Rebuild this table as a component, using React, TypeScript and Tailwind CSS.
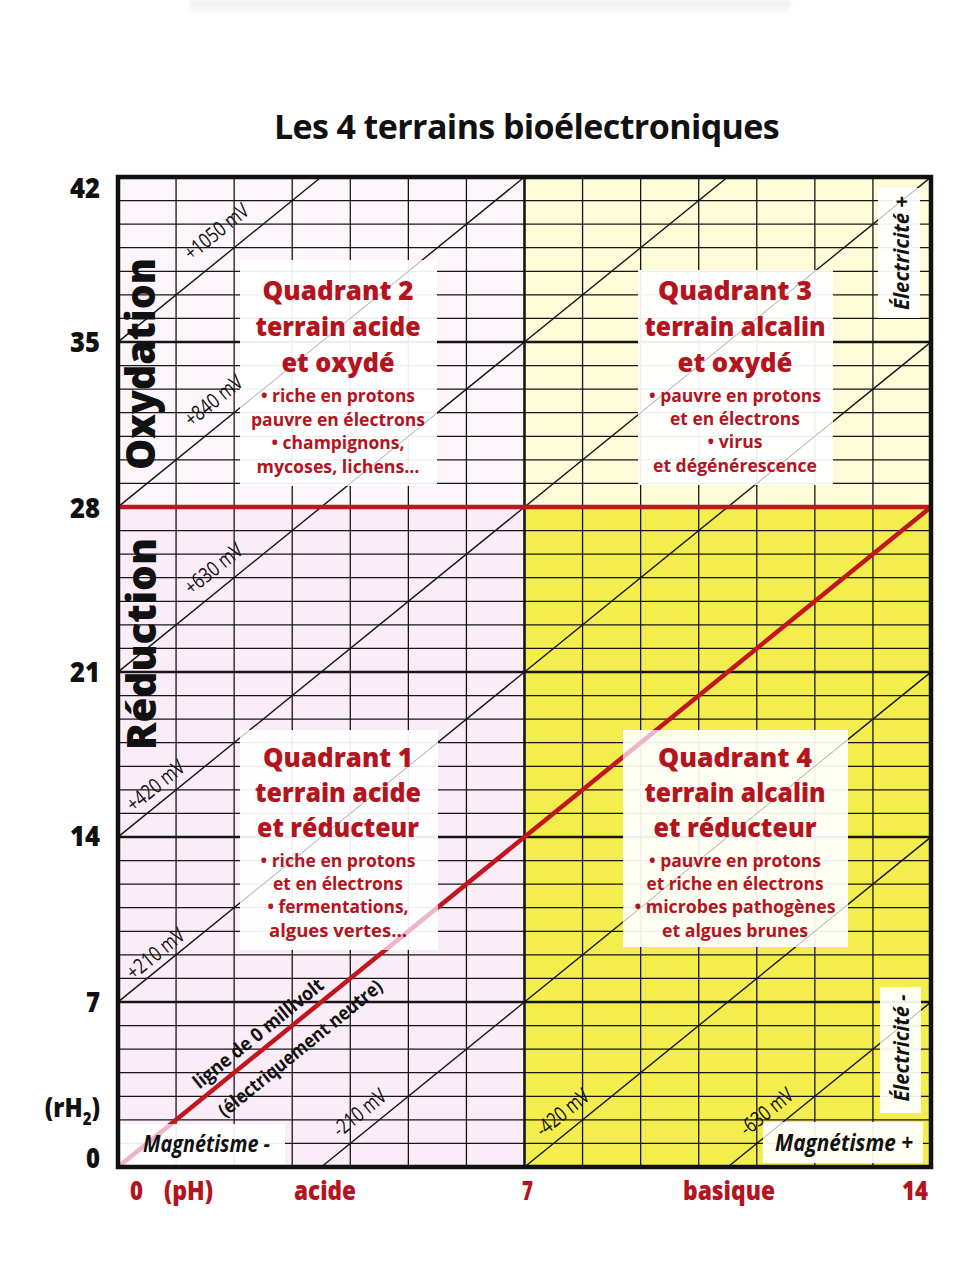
const X0 = 118;
const SX = 813 / 14;
const Y0 = 1167;
const SY = 990 / 42;
const px = (ph: number) => X0 + ph * SX;
const py = (rh: number) => Y0 - rh * SY;

const RED = '#c1161d';
const TXT = '#b3141d';
const FONT = "'Open Sans', 'Noto Sans', 'DejaVu Sans', sans-serif";
const ANGLE = (-Math.atan((2 * SY) / SX) * 180) / Math.PI;

// iso-potential lines: rH2 = 2 pH + k  (30 mV per rH2 unit)
const iso = [35, 28, 21, 14, 7, -7, -14, -21];

const boxes = [
  { x: 240, y: 260, w: 197, h: 226 },
  { x: 638, y: 270, w: 195, h: 215 },
  { x: 240, y: 730, w: 198, h: 220 },
  { x: 623, y: 730, w: 225, h: 217 },
  { x: 878, y: 188, w: 42, h: 130 },
  { x: 880, y: 987, w: 41, h: 126 },
  { x: 120, y: 1124, w: 165, h: 41 },
  { x: 763, y: 1122, w: 160, h: 41 },
];

type Line = { t: string; y: number; w: number; big?: boolean };

const quadrants: { cx: number; lines: Line[] }[] = [
  {
    cx: 338,
    lines: [
      { t: 'Quadrant 2', y: 300, w: 151, big: true },
      { t: 'terrain acide', y: 336, w: 165, big: true },
      { t: 'et oxydé', y: 372, w: 113, big: true },
      { t: '• riche en protons', y: 402, w: 154 },
      { t: 'pauvre en électrons', y: 426, w: 174 },
      { t: '• champignons,', y: 449, w: 133 },
      { t: 'mycoses, lichens…', y: 473, w: 163 },
    ],
  },
  {
    cx: 735,
    lines: [
      { t: 'Quadrant 3', y: 300, w: 154, big: true },
      { t: 'terrain alcalin', y: 336, w: 181, big: true },
      { t: 'et oxydé', y: 372, w: 115, big: true },
      { t: '• pauvre en protons', y: 402, w: 172 },
      { t: 'et en électrons', y: 425, w: 130 },
      { t: '• virus', y: 448, w: 55 },
      { t: 'et dégénérescence', y: 472, w: 164 },
    ],
  },
  {
    cx: 338,
    lines: [
      { t: 'Quadrant 1', y: 767, w: 150, big: true },
      { t: 'terrain acide', y: 802, w: 166, big: true },
      { t: 'et réducteur', y: 837, w: 162, big: true },
      { t: '• riche en protons', y: 867, w: 155 },
      { t: 'et en électrons', y: 890, w: 130 },
      { t: '• fermentations,', y: 913, w: 141 },
      { t: 'algues vertes…', y: 937, w: 138 },
    ],
  },
  {
    cx: 735,
    lines: [
      { t: 'Quadrant 4', y: 767, w: 154, big: true },
      { t: 'terrain alcalin', y: 802, w: 181, big: true },
      { t: 'et réducteur', y: 837, w: 163, big: true },
      { t: '• pauvre en protons', y: 867, w: 172 },
      { t: 'et riche en électrons', y: 890, w: 177 },
      { t: '• microbes pathogènes', y: 913, w: 201 },
      { t: 'et algues brunes', y: 937, w: 146 },
    ],
  },
];

const mvLabels = [
  { t: '+1050 mV', x: 216, y: 231, w: 76 },
  { t: '+840 mV', x: 213, y: 400, w: 68 },
  { t: '+630 mV', x: 213, y: 568, w: 68 },
  { t: '+420 mV', x: 155, y: 785, w: 68 },
  { t: '+210 mV', x: 155, y: 953, w: 68 },
  { t: '-210 mV', x: 359, y: 1112, w: 62 },
  { t: '-420 mV', x: 562, y: 1112, w: 62 },
  { t: '-630 mV', x: 766, y: 1111, w: 62 },
];

const yTicks = [
  { t: '42', y: 198 },
  { t: '35', y: 352 },
  { t: '28', y: 518 },
  { t: '21', y: 682 },
  { t: '14', y: 846 },
  { t: '7', y: 1012 },
  { t: '0', y: 1168 },
];

const xTicks = [
  { t: '0', x: 130, w: 13 },
  { t: '(pH)', x: 164, w: 49 },
  { t: 'acide', x: 294, w: 62 },
  { t: '7', x: 522, w: 11 },
  { t: 'basique', x: 683, w: 92 },
  { t: '14', x: 902, w: 26 },
];

function diag(k: number) {
  return { x1: px(-k / 2), y1: py(0), x2: px((42 - k) / 2), y2: py(42) };
}

function Chart() {
  const hLines = Array.from({ length: 41 }, (_, i) => i + 1).filter((r) => r !== 28);
  const vLines = Array.from({ length: 13 }, (_, i) => i + 1);

  return (
    <svg viewBox="0 160 979 1080" width={979} height={1080} className="block" fontFamily={FONT}>
      <defs>
        <clipPath id="plot">
          <rect x={px(0)} y={py(42)} width={px(14) - px(0)} height={py(0) - py(42)} />
        </clipPath>
        <clipPath id="boxes">
          {boxes.map((b, i) => (
            <rect key={i} x={b.x} y={b.y} width={b.w} height={b.h} />
          ))}
        </clipPath>
      </defs>

      {/* terrains */}
      <rect x={px(0)} y={py(42)} width={px(7) - px(0)} height={py(28) - py(42)} fill="#fcf6fb" />
      <rect x={px(0)} y={py(28)} width={px(7) - px(0)} height={py(0) - py(28)} fill="#fbedf7" />
      <rect x={px(7)} y={py(42)} width={px(14) - px(7)} height={py(28) - py(42)} fill="#fdfbd8" />
      <rect x={px(7)} y={py(28)} width={px(14) - px(7)} height={py(0) - py(28)} fill="#f4ed4e" />

      {/* grid */}
      <g clipPath="url(#plot)" stroke="#161616">
        {hLines.map((r) => (
          <line key={'h' + r} x1={px(0)} x2={px(14)} y1={py(r)} y2={py(r)} strokeWidth={r % 7 === 0 ? 2.4 : 1.3} />
        ))}
        {vLines.map((p) => (
          <line key={'v' + p} y1={py(0)} y2={py(42)} x1={px(p)} x2={px(p)} strokeWidth={p === 7 ? 2.6 : 1.3} />
        ))}
        {iso.map((k) => (
          <line key={'d' + k} {...diag(k)} strokeWidth={1.4} />
        ))}
      </g>

      {/* 0 mV line and rH2 28 */}
      <line x1={px(0)} y1={py(28)} x2={px(14)} y2={py(28)} stroke={RED} strokeWidth={4.5} />
      <line x1={px(0)} y1={py(0)} x2={px(14)} y2={py(28)} stroke={RED} strokeWidth={4.5} />

      {/* label panels */}
      {boxes.map((b, i) => (
        <rect key={i} x={b.x} y={b.y} width={b.w} height={b.h} fill="#ffffff" opacity={0.93} />
      ))}
      <g clipPath="url(#boxes)">
        {iso.map((k) => (
          <line key={'f' + k} {...diag(k)} stroke="#b4b4b4" strokeWidth={1} />
        ))}
        <line x1={px(0)} y1={py(0)} x2={px(14)} y2={py(28)} stroke="#f0b3c7" strokeWidth={4.5} />
      </g>

      {/* frame */}
      <rect x={px(0)} y={py(42)} width={px(14) - px(0)} height={py(0) - py(42)} fill="none" stroke="#111" strokeWidth={4.5} />

      {/* quadrant texts */}
      {quadrants.map((q, qi) =>
        q.lines.map((l, li) => (
          <text
            key={qi + '-' + li}
            x={q.cx}
            y={l.y}
            textAnchor="middle"
            fontSize={l.big ? 27 : 17}
            fontWeight={l.big ? 800 : 700}
            fill={TXT}
            textLength={l.w}
            lengthAdjust="spacingAndGlyphs"
          >
            {l.t}
          </text>
        ))
      )}

      {/* mV labels */}
      {mvLabels.map((m) => (
        <text
          key={m.t}
          transform={`translate(${m.x} ${m.y}) rotate(${ANGLE})`}
          textAnchor="middle"
          dominantBaseline="central"
          fontSize={21}
          fill="#111"
          textLength={m.w}
          lengthAdjust="spacingAndGlyphs"
        >
          {m.t}
        </text>
      ))}
      <text
        transform={`translate(258 1033) rotate(${ANGLE})`}
        textAnchor="middle"
        dominantBaseline="central"
        fontSize={19}
        fontWeight={700}
        fill="#111"
        textLength={162}
        lengthAdjust="spacingAndGlyphs"
      >
        ligne de 0 millivolt
      </text>
      <text
        transform={`translate(300 1048) rotate(${ANGLE})`}
        textAnchor="middle"
        dominantBaseline="central"
        fontSize={19}
        fontWeight={700}
        fill="#111"
        textLength={205}
        lengthAdjust="spacingAndGlyphs"
      >
        (électriquement neutre)
      </text>

      {/* side labels */}
      <text transform="translate(155 364) rotate(-90)" textAnchor="middle" fontSize={41} fontWeight={800} fill="#111" textLength={212} lengthAdjust="spacingAndGlyphs">
        Oxydation
      </text>
      <text transform="translate(156 644) rotate(-90)" textAnchor="middle" fontSize={41} fontWeight={800} fill="#111" textLength={212} lengthAdjust="spacingAndGlyphs">
        Réduction
      </text>
      <text transform="translate(909 253) rotate(-90)" textAnchor="middle" fontSize={22} fontWeight={700} fontStyle="italic" fill="#111" textLength={114} lengthAdjust="spacingAndGlyphs">
        Électricité +
      </text>
      <text transform="translate(909 1048) rotate(-90)" textAnchor="middle" fontSize={22} fontWeight={700} fontStyle="italic" fill="#111" textLength={107} lengthAdjust="spacingAndGlyphs">
        Électricité -
      </text>
      <text x={143} y={1152} fontSize={23} fontWeight={700} fontStyle="italic" fill="#111" textLength={127} lengthAdjust="spacingAndGlyphs">
        Magnétisme -
      </text>
      <text x={775} y={1151} fontSize={23} fontWeight={700} fontStyle="italic" fill="#111" textLength={138} lengthAdjust="spacingAndGlyphs">
        Magnétisme +
      </text>

      {/* axis ticks */}
      {yTicks.map((t) => (
        <text key={t.t} x={100} y={t.y} textAnchor="end" fontSize={29} fontWeight={800} fill="#111" textLength={t.t.length === 2 ? 30 : 14} lengthAdjust="spacingAndGlyphs">
          {t.t}
        </text>
      ))}
      <text transform="translate(100 1117) scale(0.88 1)" textAnchor="end" fontSize={27} fontWeight={800} fill="#111">
        (rH<tspan fontSize={17} dy={8}>2</tspan>
        <tspan dy={-8}>)</tspan>
      </text>
      {xTicks.map((t) => (
        <text key={t.t} x={t.x} y={1200} fontSize={27} fontWeight={800} fill={TXT} textLength={t.w} lengthAdjust="spacingAndGlyphs">
          {t.t}
        </text>
      ))}
    </svg>
  );
}

export default function App() {
  return (
    <div className="w-[979px] h-[1280px] bg-white overflow-hidden">
      <div className="mx-auto h-[16px] w-[600px] bg-linear-to-b from-[#ececec] to-white blur-[2px]" />
      <h1 className="mt-[90px] h-[40px] pl-[74px] text-center text-[34px] leading-[40px] font-bold tracking-[-0.6px] text-[#111] font-['Open_Sans',sans-serif]">
        Les 4 terrains bioélectroniques
      </h1>
      <div className="mt-[14px]">
        <Chart />
      </div>
    </div>
  );
}
